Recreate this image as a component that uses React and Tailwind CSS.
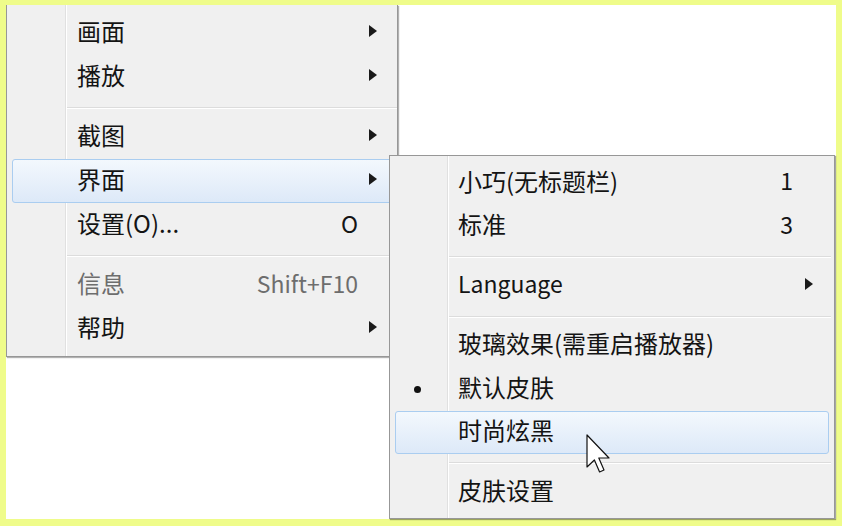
import React from 'react';

const font = { fontFamily: '"Noto Sans CJK SC", "Noto Sans", sans-serif' };

const mainItems = [
  { label: '画面', sub: true },
  { label: '播放', sub: true },
  { sep: true },
  { label: '截图', sub: true },
  { label: '界面', sub: true, active: true },
  { label: '设置(O)...', key: 'O' },
  { sep: true },
  { label: '信息', key: 'Shift+F10', disabled: true },
  { label: '帮助', sub: true },
];

const skinItems = [
  { label: '小巧(无标题栏)', key: '1' },
  { label: '标准', key: '3' },
  { sep: true },
  { label: 'Language', sub: true },
  { sep: true },
  { label: '玻璃效果(需重启播放器)' },
  { label: '默认皮肤', checked: true },
  { label: '时尚炫黑', active: true },
  { sep: true },
  { label: '皮肤设置' },
];

// plain ascii strings read a touch narrower in the original UI font
const size = (s) => (/^[\x20-\x7e]+$/.test(s) ? 'text-[23px]' : 'text-[24px]');

function Arrow() {
  return (
    <svg width="8" height="12" viewBox="0 0 8 12">
      <path d="M0 0 L8 6 L0 12 Z" fill="#1a1a1a" />
    </svg>
  );
}

function Row({ item, height, padLeft, arrowCell, arrowPad, bulletLeft }) {
  const rowClass = item.active
    ? 'border-[#aacdf0] bg-[linear-gradient(to_bottom,#f3f8fd,#dde9f8)]'
    : 'border-transparent';
  const color = item.disabled ? 'text-[#6d6d6d]' : 'text-[#141414]';
  return (
    <div
      className={`relative mx-[5px] flex items-center rounded-[3px] border pb-[4px] ${rowClass}`}
      style={{ height }}
    >
      {item.checked && (
        <span
          className="absolute top-[18px] h-[7px] w-[7px] rounded-full bg-[#111]"
          style={{ left: bulletLeft }}
        />
      )}
      <span className={`flex-1 leading-none ${size(item.label)} ${color}`} style={{ paddingLeft: padLeft }}>
        {item.label}
      </span>
      {item.key && <span className={`leading-none ${size(item.key)} ${color}`}>{item.key}</span>}
      <span className="flex justify-end" style={{ width: arrowCell, paddingRight: arrowPad }}>
        {item.sub && <Arrow />}
      </span>
    </div>
  );
}

function Separator({ left, right }) {
  return (
    <div className="flex h-[16px] flex-col pt-[8px]" style={{ marginLeft: left, marginRight: right }}>
      <div className="h-px bg-[#dcdcdc]" />
      <div className="h-px bg-white" />
    </div>
  );
}

export default function App() {
  return (
    <div className="h-[526px] w-[842px] bg-[#effc8a] pb-[7px] pl-[6px] pr-[6px] pt-[5px]" style={font}>
      <div className="relative h-full w-full bg-white">
        {/* main context menu, its top runs off the capture */}
        <div className="h-[352px] w-[392px] border-b border-l border-r border-[#979797] bg-[linear-gradient(to_right,#f0f0f0_58px,#e0e0e0_58px,#e0e0e0_59px,#ffffff_59px,#ffffff_60px,#f0f0f0_60px)] pt-[6px] shadow-[1px_1px_1px_rgba(0,0,0,0.3)]">
          {mainItems.map((item, i) =>
            item.sep ? (
              <Separator key={i} left={60} right={0} />
            ) : (
              <Row key={i} item={item} height={44} padLeft={64} arrowCell={33} arrowPad={14} />
            )
          )}
        </div>

        {/* 界面 submenu */}
        <div className="absolute left-[383px] top-[150px] h-[364px] w-[446px] border border-[#979797] bg-[linear-gradient(to_right,#f0f0f0_57px,#e0e0e0_57px,#e0e0e0_58px,#ffffff_58px,#ffffff_59px,#f0f0f0_59px)] pt-[5px] shadow-[1px_1px_1px_rgba(0,0,0,0.35)]">
          {skinItems.map((item, i) =>
            item.sep ? (
              <Separator key={i} left={59} right={3} />
            ) : (
              <Row key={i} item={item} height={43.5} padLeft={62} arrowCell={35} arrowPad={15} bulletLeft={18} />
            )
          )}
        </div>

        {/* mouse pointer */}
        <svg
          className="absolute left-[580px] top-[429px]"
          width="24"
          height="40"
          viewBox="0 0 12 20"
        >
          <path
            d="M0.5 0.5 L0.5 16.5 L4.2 13 L6.8 19 L9 18 L6.4 12 L11.5 12 Z"
            fill="#fff"
            stroke="#111"
            strokeWidth="0.6"
            strokeLinejoin="round"
          />
        </svg>
      </div>
    </div>
  );
}
